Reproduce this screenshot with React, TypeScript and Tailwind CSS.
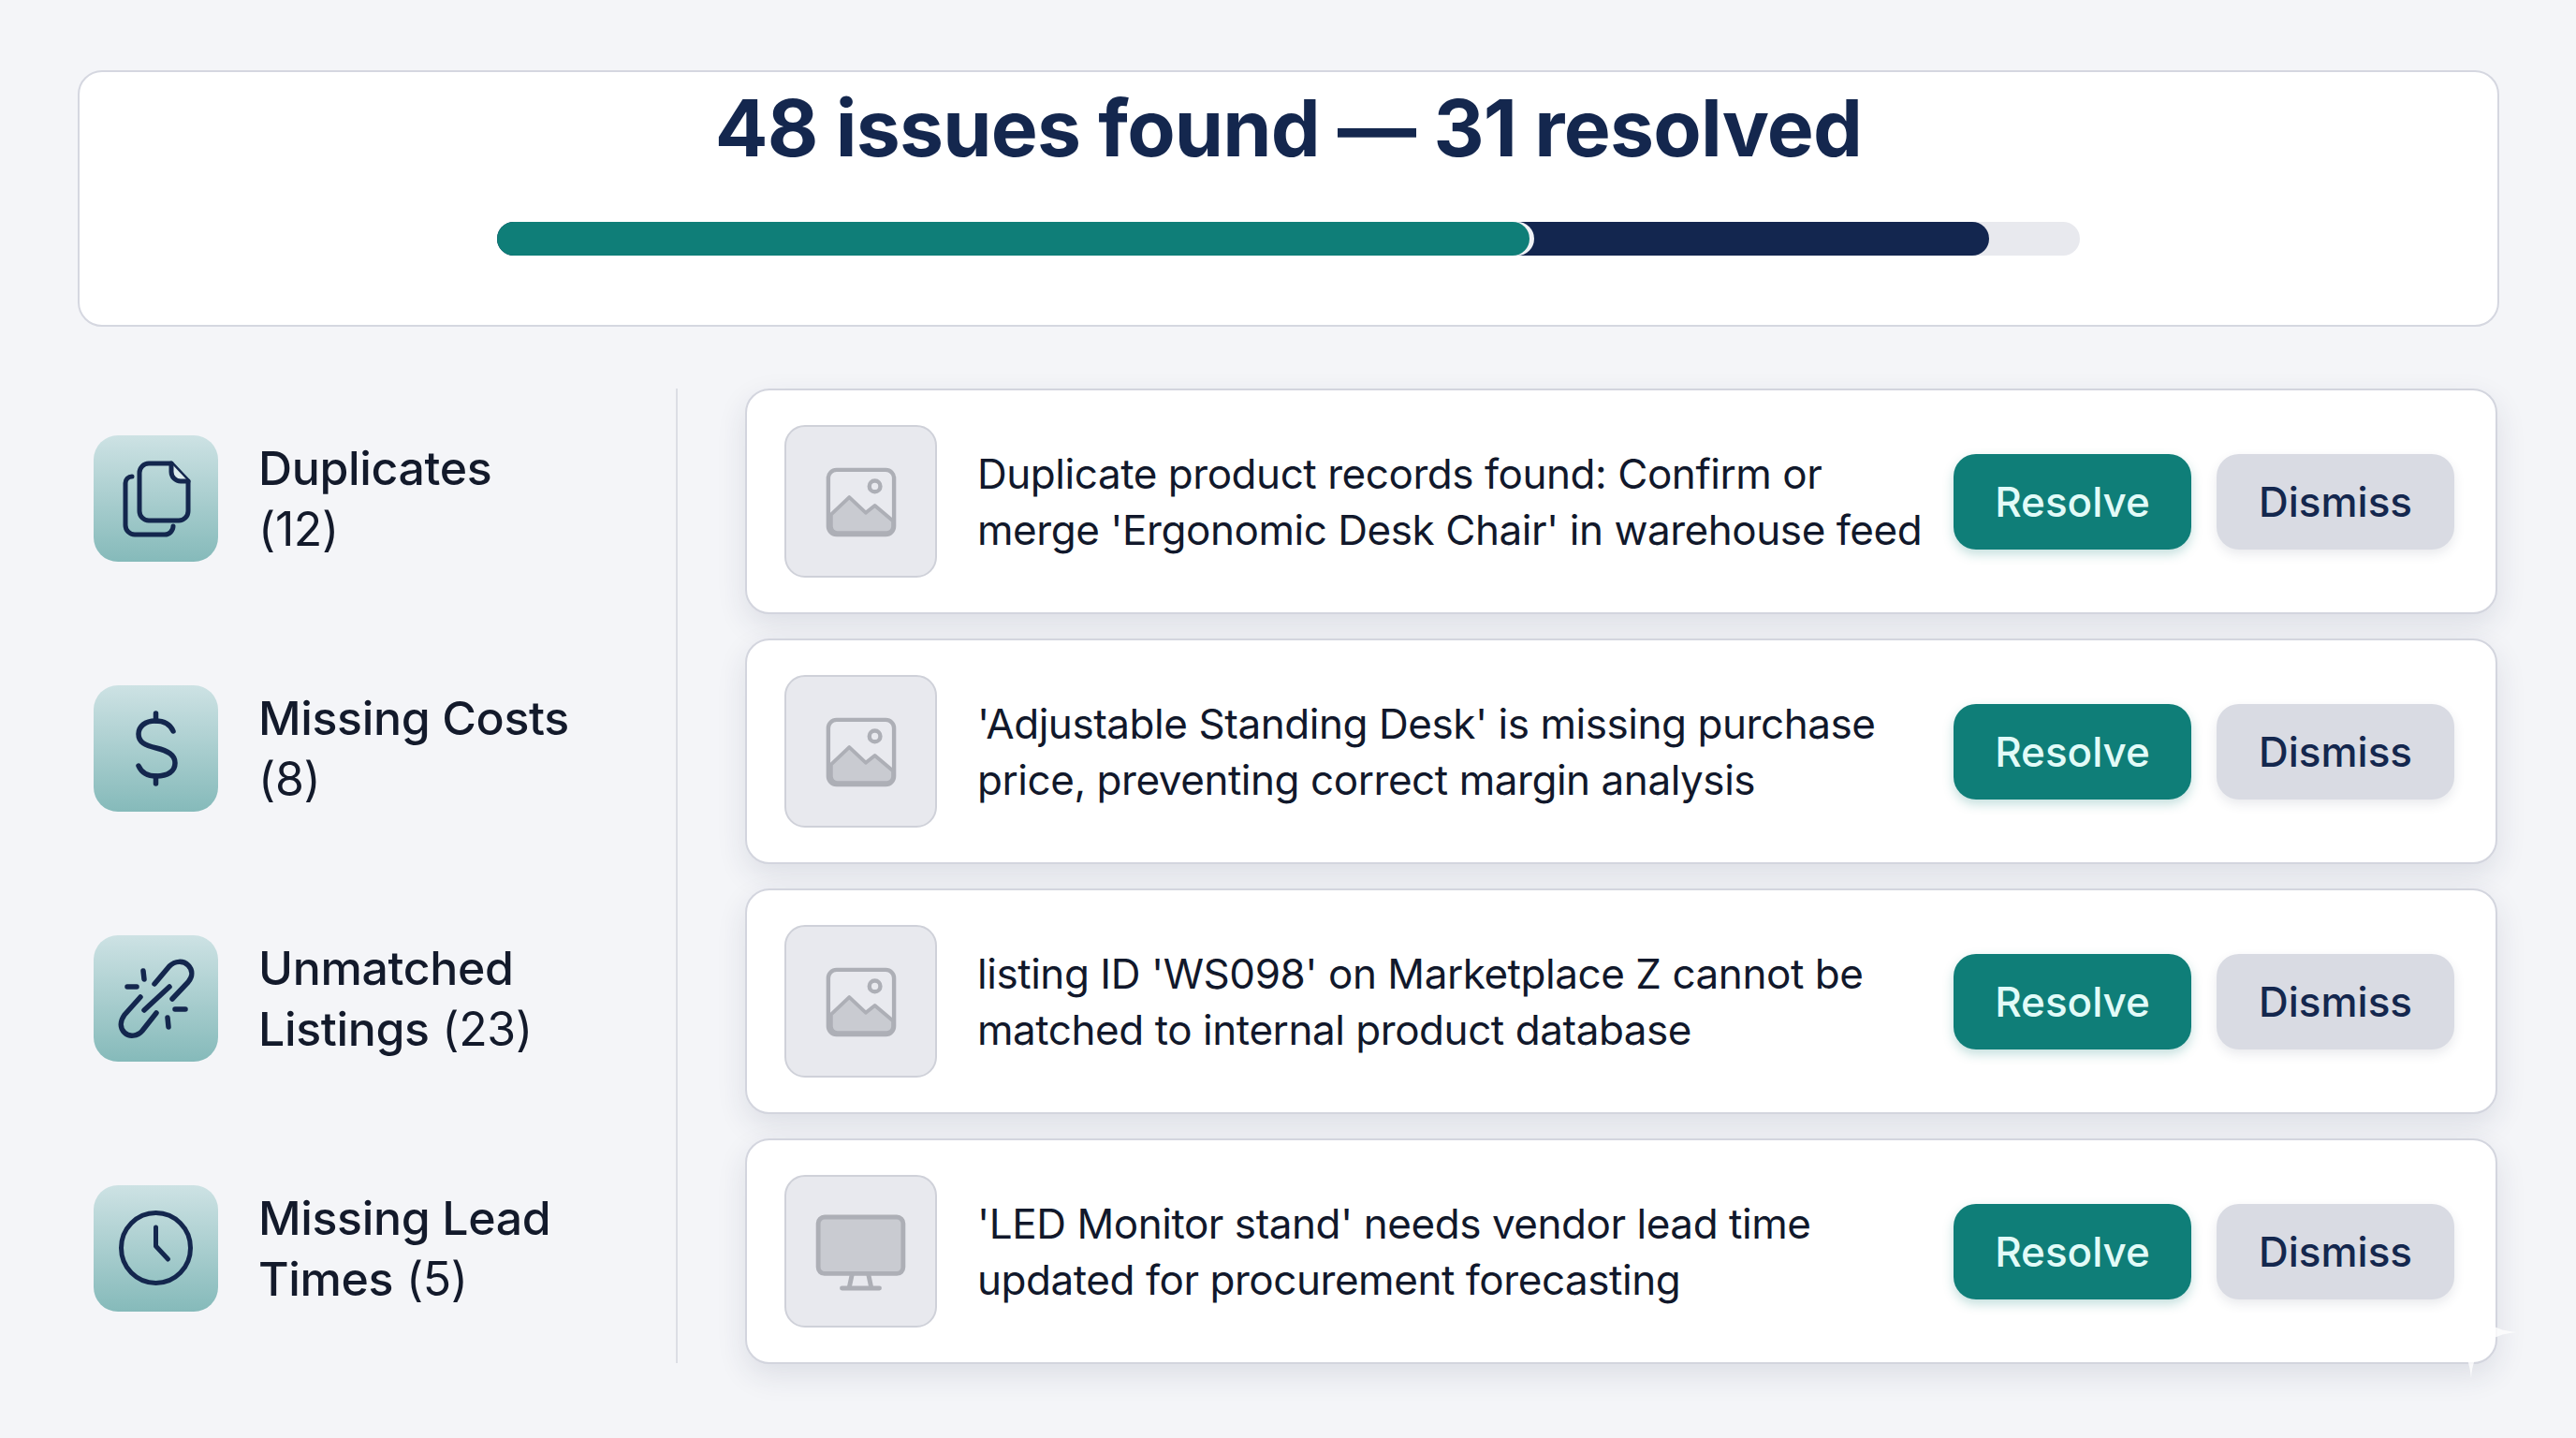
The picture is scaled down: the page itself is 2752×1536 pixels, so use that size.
import type { ReactNode } from 'react';

const NAVY = '#14274e';

function CopyGlyph() {
  return (
    <svg width="133" height="135" viewBox="0 0 133 135" fill="none" stroke={NAVY} strokeWidth="5" strokeLinecap="round" strokeLinejoin="round">
      <path d="M59 30h24l18 19v32a10 10 0 0 1-10 10H59a10 10 0 0 1-10-10V40a10 10 0 0 1 10-10z" />
      <path d="M83 30v9a10 10 0 0 0 10 10h8" fill="#dcebec" />
      <path d="M41 44a7 7 0 0 0-7 7v45a10 10 0 0 0 10 10h32a9 9 0 0 0 9-9" />
    </svg>
  );
}

function DollarGlyph() {
  return (
    <svg width="133" height="135" viewBox="0 0 133 135" fill="none" stroke={NAVY} strokeWidth="5.5" strokeLinecap="round" strokeLinejoin="round">
      <path d="M66.5 30v8M66.5 97v8" />
      <path d="M85 49c-3-7-10-11-19-11-11 0-18 6-18 14 0 9 7 12 19 15 12 3 20 7 20 16 0 9-8 14-20 14-9 0-16-4-19-11" />
    </svg>
  );
}

function BrokenLinkGlyph() {
  return (
    <svg width="133" height="135" viewBox="0 0 133 135" fill="none" stroke={NAVY} strokeWidth="5.5" strokeLinecap="round" strokeLinejoin="round">
      <path d="M65 52l16-19c6-6 15-6 20-1s5 12 0 18L84 68" />
      <path d="M50 66L33 85c-5 7-5 14 0 19s14 4 19-2l15-19" />
      <path d="M54 80l27-25" />
      <path d="M53 38l1 9M36 55h10M87 79h11M79 88l1 10" />
    </svg>
  );
}

function ClockGlyph() {
  return (
    <svg width="133" height="135" viewBox="0 0 133 135" fill="none" stroke={NAVY} strokeWidth="5" strokeLinecap="round" strokeLinejoin="round">
      <ellipse cx="66.5" cy="67" rx="37" ry="37.5" />
      <path d="M66.5 45v20l13 14" />
    </svg>
  );
}

function ImageThumb() {
  return (
    <svg width="159" height="158" viewBox="0 0 163 162" fill="none">
      <rect x="46" y="46" width="72" height="71" rx="9" fill="#e9eaef" stroke="#adafb6" strokeWidth="4.5" />
      <path d="M49 95l20-19 18 17 10-8 20 17v6a7 7 0 0 1-7 7H56a7 7 0 0 1-7-7z" fill="#c9cbd1" stroke="#adafb6" strokeWidth="4" strokeLinejoin="round" />
      <circle cx="97" cy="64" r="6" stroke="#adafb6" strokeWidth="4.5" />
    </svg>
  );
}

function MonitorThumb() {
  return (
    <svg width="159" height="158" viewBox="0 0 163 162" fill="none">
      <rect x="35" y="43" width="93" height="62" rx="7" fill="#c9cbd1" stroke="#adafb6" strokeWidth="5" />
      <path d="M72 106l-3 14M90 106l3 14" stroke="#adafb6" strokeWidth="5" />
      <path d="M61 121h41" stroke="#adafb6" strokeWidth="5" strokeLinecap="round" />
    </svg>
  );
}

const categories: { icon: ReactNode; first: ReactNode; second: ReactNode }[] = [
  { icon: <CopyGlyph />, first: <span className="font-[550]">Duplicates</span>, second: '(12)' },
  { icon: <DollarGlyph />, first: <span className="font-[550]">Missing Costs</span>, second: '(8)' },
  {
    icon: <BrokenLinkGlyph />,
    first: <span className="font-[550]">Unmatched</span>,
    second: <><span className="font-[550]">Listings</span> (23)</>,
  },
  {
    icon: <ClockGlyph />,
    first: <span className="font-[550]">Missing Lead</span>,
    second: <><span className="font-[550]">Times</span> (5)</>,
  },
];

const issues: { thumb: ReactNode; lines: [string, string] }[] = [
  {
    thumb: <ImageThumb />,
    lines: ['Duplicate product records found: Confirm or', "merge 'Ergonomic Desk Chair' in warehouse feed"],
  },
  {
    thumb: <ImageThumb />,
    lines: ["'Adjustable Standing Desk' is missing purchase", 'price, preventing correct margin analysis'],
  },
  {
    thumb: <ImageThumb />,
    lines: ["listing ID 'WS098' on Marketplace Z cannot be", 'matched to internal product database'],
  },
  {
    thumb: <MonitorThumb />,
    lines: ["'LED Monitor stand' needs vendor lead time", 'updated for procurement forecasting'],
  },
];

export default function App() {
  return (
    <div className="relative w-[2752px] h-[1536px] overflow-hidden bg-[#f4f5f8] pl-[83px] pr-[82px] pt-[75px] font-['Inter','Liberation_Sans',sans-serif] text-[#131a2b]">
      {/* Summary */}
      <div className="flex h-[274px] flex-col items-center rounded-[26px] border-2 border-[#d5d7e0] bg-white pt-[10px]">
        <h1 className="text-[84px] leading-[100px] font-bold tracking-[-0.8px] text-[#14274e]">
          48 issues found — 31 resolved
        </h1>
        <div className="mt-[50px] h-[36px] w-[1691px] rounded-full bg-[#e8e9ee]">
          <div className="h-full w-[1594px] rounded-full bg-[#13264f]">
            <div className="h-full w-[1103px] rounded-full bg-[#0f7e78] shadow-[5px_0_0_#f1f3f6]" />
          </div>
        </div>
      </div>

      <div className="mt-[66px] flex">
        {/* Categories */}
        <div className="flex h-[1041px] w-[641px] flex-col gap-[132px] border-r-2 border-[#dcdee5] pl-[17px] pt-[50px]">
          {categories.map((c, i) => (
            <div key={i} className="flex h-[135px] items-center gap-[43px]">
              <div className="h-[135px] w-[133px] shrink-0 rounded-[26px] bg-gradient-to-b from-[#cde2e4] to-[#85baba]">
                {c.icon}
              </div>
              <div className="text-[50px] leading-[65px] tracking-[-0.35px]">
                <div>{c.first}</div>
                <div>{c.second}</div>
              </div>
            </div>
          ))}
        </div>

        {/* Issues */}
        <div className="ml-[72px] mr-[2px] flex flex-1 flex-col gap-[26px]">
          {issues.map((issue, i) => (
            <div
              key={i}
              className="flex h-[241px] items-center rounded-[26px] border-2 border-[#d3d5de] bg-white pl-[40px] pr-[44px] shadow-[0_12px_32px_rgba(40,50,80,0.11)]"
            >
              <div className="flex h-[163px] w-[163px] shrink-0 items-center justify-center rounded-[22px] border-2 border-[#cfd1d9] bg-[#e8e9ee]">
                {issue.thumb}
              </div>
              <div className="ml-[43px] flex-1 whitespace-nowrap text-[44px] leading-[60px] tracking-[-0.45px] text-[#11182b]">
                <div>{issue.lines[0]}</div>
                <div>{issue.lines[1]}</div>
              </div>
              <button className="h-[102px] w-[254px] rounded-[24px] bg-[#0f7e78] text-[44px] font-medium text-[#e2fbf8] shadow-[0_5px_12px_rgba(15,126,120,0.25)]">
                Resolve
              </button>
              <button className="ml-[27px] h-[102px] w-[254px] rounded-[24px] bg-[#d9dbe3] text-[44px] font-medium text-[#14274e] shadow-[0_5px_12px_rgba(40,50,80,0.1)]">
                Dismiss
              </button>
            </div>
          ))}
        </div>
      </div>

      {/* Corner sparkle */}
      <svg className="absolute left-[2590px] top-[1373px] opacity-80" width="100" height="100" viewBox="0 0 100 100">
        <path d="M50 0C52 32 68 48 100 50 68 52 52 68 50 100 48 68 32 52 0 50 32 48 48 32 50 0z" fill="#ffffff" />
      </svg>
    </div>
  );
}
